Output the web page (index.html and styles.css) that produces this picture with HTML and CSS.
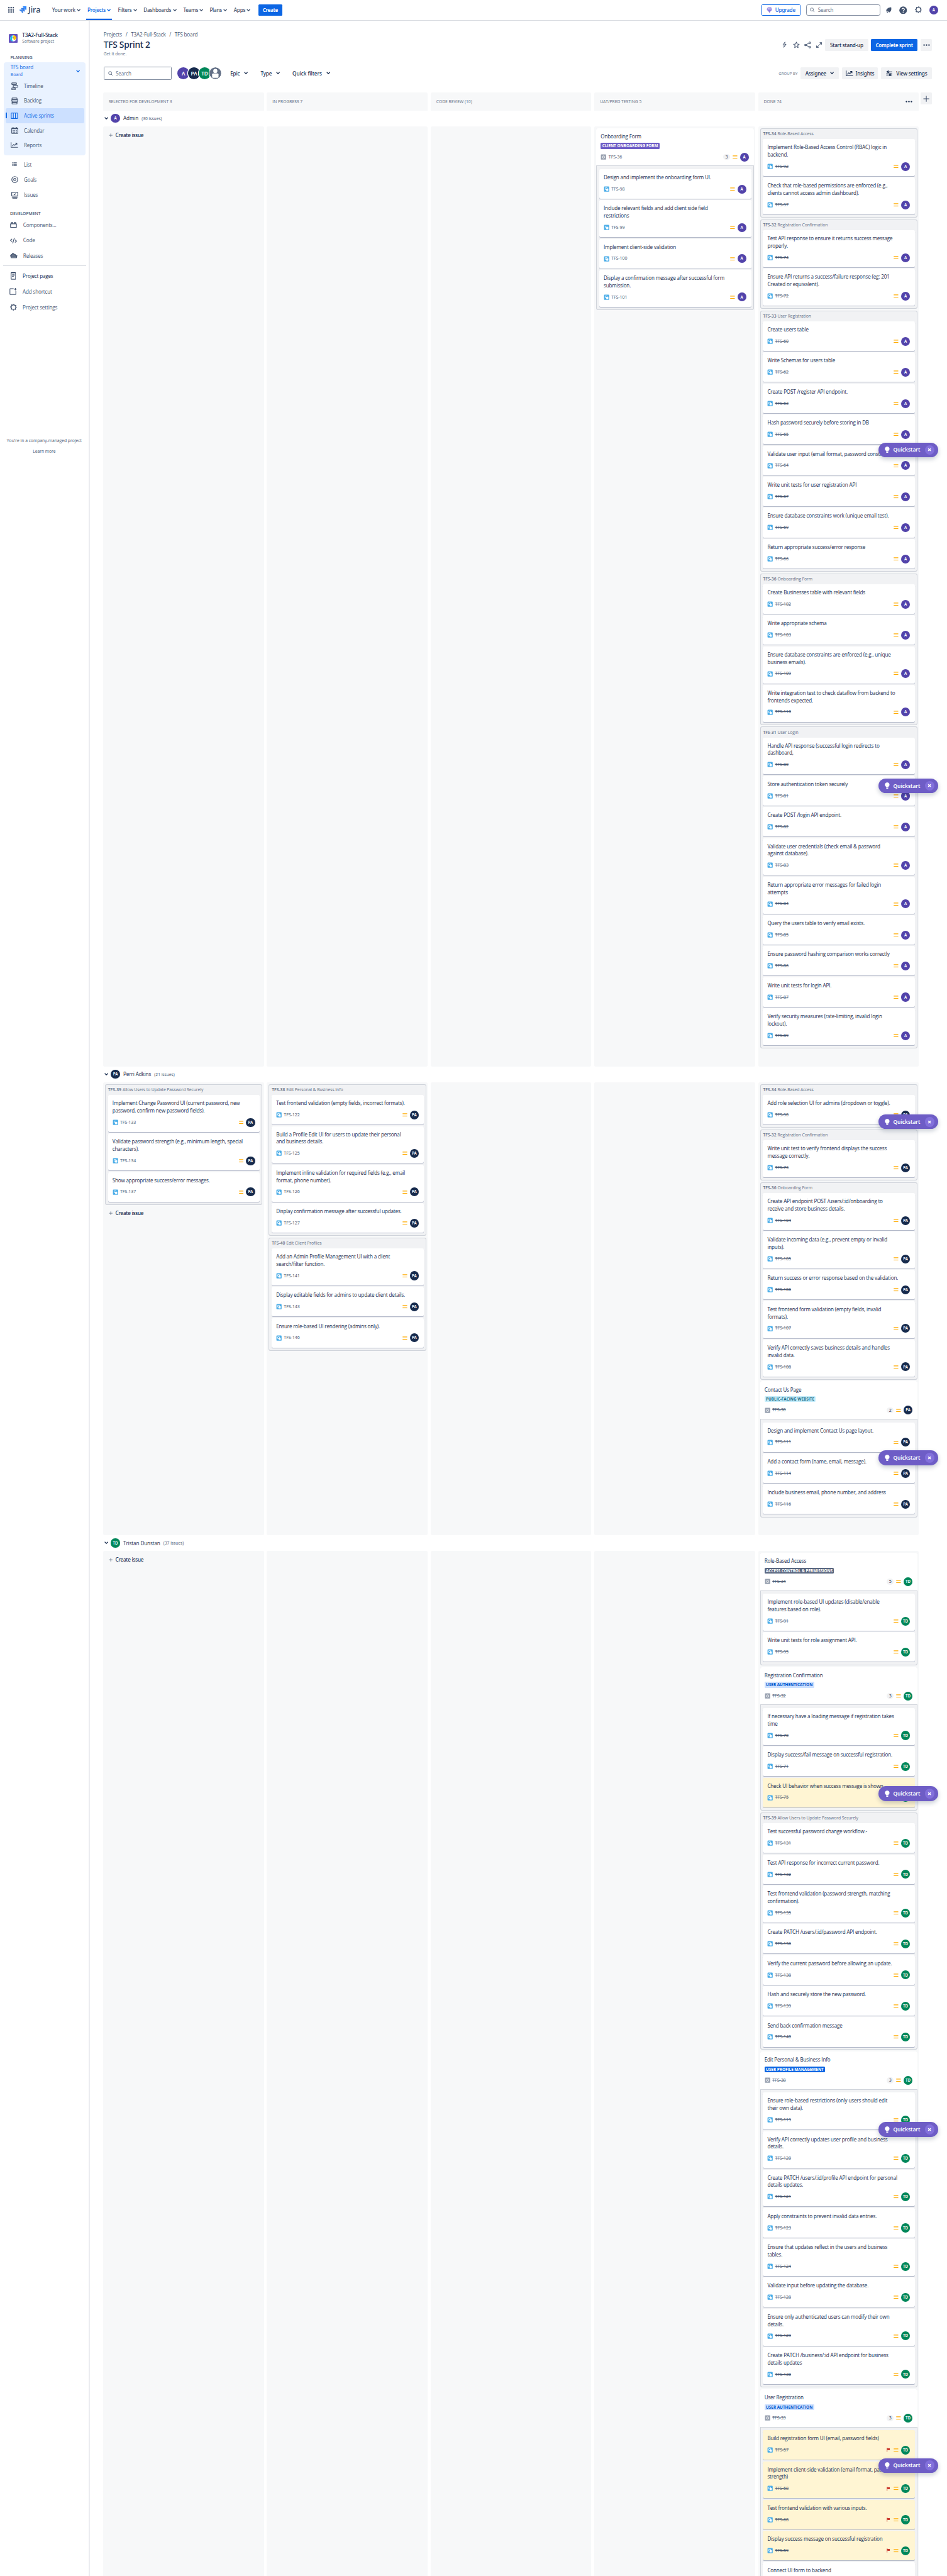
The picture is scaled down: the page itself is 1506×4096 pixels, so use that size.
FILE: index.html
```html
<!DOCTYPE html>
<html lang="en">
<head>
<meta charset="utf-8">
<title>TFS board - Jira</title>
<link rel="stylesheet" href="styles.css">
</head>
<body>
<svg class="sprite" aria-hidden="true">
  <symbol id="i-chev" viewBox="0 0 8 8"><path d="M1.200 2.600 4 5.400 6.800 2.600" fill="none" stroke="currentColor" stroke-width="1.500" stroke-linecap="round" stroke-linejoin="round"/></symbol>
  <symbol id="i-apps" viewBox="0 0 12 12"><g fill="currentColor"><rect width="3" height="3" rx=".8"/><rect x="4.500" width="3" height="3" rx=".8"/><rect x="9" width="3" height="3" rx=".8"/><rect y="4.500" width="3" height="3" rx=".8"/><rect x="4.500" y="4.500" width="3" height="3" rx=".8"/><rect x="9" y="4.500" width="3" height="3" rx=".8"/><rect y="9" width="3" height="3" rx=".8"/><rect x="4.500" y="9" width="3" height="3" rx=".8"/><rect x="9" y="9" width="3" height="3" rx=".8"/></g></symbol>
  <symbol id="i-jira" viewBox="0 0 14 14"><path d="M6.800 0H14v7.300a3.200 3.200 0 0 1-3.200-3.200V3.300H10A3.200 3.200 0 0 1 6.800 0z" fill="#2684ff"/><path d="M3.400 3.400h7.200v7.300a3.200 3.200 0 0 1-3.200-3.200v-.8h-.8a3.200 3.200 0 0 1-3.200-3.300z" fill="#2f7bea"/><path d="M0 6.800h7.200V14A3.200 3.200 0 0 1 4 10.900V10h-.8A3.200 3.200 0 0 1 0 6.800z" fill="#3b83e8"/></symbol>
  <symbol id="i-search" viewBox="0 0 10 10"><circle cx="4.200" cy="4.200" r="3.300" fill="none" stroke="currentColor" stroke-width="1.200"/><path d="M6.700 6.700 9.300 9.300" stroke="currentColor" stroke-width="1.300" stroke-linecap="round"/></symbol>
  <symbol id="i-gem" viewBox="0 0 12 12"><path d="M3 1.300h6L11.200 4.500 6 11 .8 4.500zM.8 4.500h10.400M4.200 1.300 3.800 4.500 6 11l2.200-6.500-.4-3.200M6 1.300v9.700M2 7h8" fill="#dfd8fd" stroke="#8270db" stroke-width="1"/></symbol>
  <symbol id="i-bell" viewBox="0 0 14 14"><path d="M12.600.6c.5 2.100.7 5.200-.4 7.700-.8 1.700-2 2.500-2.600 3.700L1 7.100C2.300 6.600 3 4.900 4.700 3.300 6.900 1.500 10 .7 12.600.6z" fill="currentColor"/><path d="M2.700 9.300l3.800 2.200a2.200 2.200 0 0 1-3.800-2.200z" fill="currentColor"/></symbol>
  <symbol id="i-help" viewBox="0 0 16 16"><circle cx="8" cy="8" r="7.700" fill="currentColor"/><path d="M5.500 6.300a2.500 2.300 0 1 1 3.700 2c-.8.4-1.200.8-1.200 1.600" fill="none" stroke="#fff" stroke-width="1.600"/><circle cx="8" cy="12" r="1.050" fill="#fff"/></symbol>
  <symbol id="i-gear" viewBox="0 0 14 14"><circle cx="7" cy="7" r="4.500" fill="none" stroke="currentColor" stroke-width="1.500"/><circle cx="7" cy="7" r="5.800" fill="none" stroke="currentColor" stroke-width="1.700" stroke-dasharray="2.280 2.280" stroke-dashoffset="1.140"/></symbol>
  <symbol id="i-bolt" viewBox="0 0 9 13"><path d="M5.600.9 1.200 7h2.900l-.8 5 4.500-6.300H4.900z" fill="none" stroke="currentColor" stroke-width="1.200" stroke-linejoin="round"/></symbol>
  <symbol id="i-star" viewBox="0 0 14 14"><path d="M7 1.200l1.700 3.800 4 .5-3 2.800.8 4.100L7 10.400 3.500 12.400l.8-4.100-3-2.800 4-.5z" fill="none" stroke="currentColor" stroke-width="1.300" stroke-linejoin="round"/></symbol>
  <symbol id="i-share" viewBox="0 0 14 14"><g fill="none" stroke="currentColor" stroke-width="1.300"><circle cx="2.500" cy="7" r="1.700"/><circle cx="11.200" cy="2.700" r="1.700"/><circle cx="11.200" cy="11.300" r="1.700"/><path d="M4 6.200 9.700 3.400M4 7.800l5.700 2.800"/></g></symbol>
  <symbol id="i-expand" viewBox="0 0 12 12"><path d="M7.500.9h3.600v3.600M10.800 1.200 7.300 4.700M4.500 11.100H.9V7.500M1.200 10.800l3.500-3.500" fill="none" stroke="currentColor" stroke-width="1.400" stroke-linecap="round"/></symbol>
  <symbol id="i-more" viewBox="0 0 14 4"><g fill="currentColor"><circle cx="2" cy="2" r="1.500"/><circle cx="7" cy="2" r="1.500"/><circle cx="12" cy="2" r="1.500"/></g></symbol>
  <symbol id="i-chart" viewBox="0 0 15 12"><path d="M.8.8v9.700h13.600M3.600 7.400l2.700-2.700 2 1.900 4-4.100M9.600 2h3v3" fill="none" stroke="currentColor" stroke-width="1.400" stroke-linejoin="round" stroke-linecap="round"/></symbol>
  <symbol id="i-sliders" viewBox="0 0 13 12"><g fill="none" stroke="currentColor" stroke-width="1.400"><path d="M.5 2.800h2.800M7 2.800h5.500M.5 9.200h5.700M10.500 9.200h2"/><path d="M.5 6h12" stroke-width=".9"/><circle cx="4.700" cy="2.800" r="1.700" fill="#f1f2f4"/><circle cx="8.500" cy="9.200" r="1.700" fill="#f1f2f4"/></g></symbol>
  <symbol id="i-plus" viewBox="0 0 14 14"><path d="M7 .7v12.600M.7 7h12.600" stroke="currentColor" stroke-width="1.500"/></symbol>
  <symbol id="i-timeline" viewBox="0 0 14 16"><g fill="none" stroke="currentColor" stroke-width="1.500"><rect x="1" y="1" width="9.500" height="3.600" rx="1"/><rect x="4" y="6.200" width="9.200" height="3.600" rx="1"/><rect x="1" y="11.400" width="7" height="3.600" rx="1"/></g></symbol>
  <symbol id="i-backlog" viewBox="0 0 14 14"><g fill="none" stroke="currentColor" stroke-width="1.500"><rect x="1.500" y="1" width="10" height="2.800" rx=".8"/><rect x="1" y="3.900" width="12" height="3.200" rx=".8"/><rect x="1.500" y="7.100" width="10.500" height="3" rx=".8"/><rect x="1.500" y="10.100" width="10" height="3" rx=".8"/></g></symbol>
  <symbol id="i-board" viewBox="0 0 15 13"><path d="M1 1.800a.8.8 0 0 1 .8-.8h11.400a.8.8 0 0 1 .8.800v9.400a.8.8 0 0 1-.8.800H1.800a.8.8 0 0 1-.8-.8zM5.300 1v11M9.700 1v11" fill="none" stroke="currentColor" stroke-width="1.500"/></symbol>
  <symbol id="i-calendar" viewBox="0 0 14 14"><rect x=".8" y="2" width="12.400" height="11.200" rx="1" fill="none" stroke="currentColor" stroke-width="1.300"/><path d="M.8 3.300h12.400M3.500.3v3M10.500.3v3" stroke="currentColor" stroke-width="2"/><path d="M3 7h8M3 9h8M3 11h8" stroke="currentColor" stroke-width="1.300" stroke-dasharray="1.600 1.600"/></symbol>
  <symbol id="i-list" viewBox="0 0 10 8"><path d="M0 1h1.600M3 1h7M0 4h1.600M3 4h7M0 7h1.600M3 7h7" stroke="currentColor" stroke-width="1.500"/></symbol>
  <symbol id="i-goal" viewBox="0 0 14 14"><g fill="none" stroke="currentColor" stroke-width="1.500"><circle cx="7" cy="7" r="6"/><circle cx="7" cy="7" r="2.300"/></g></symbol>
  <symbol id="i-issues" viewBox="0 0 14 14"><rect x=".8" y=".8" width="12.400" height="7.800" rx=".8" fill="none" stroke="currentColor" stroke-width="1.500"/><path d="M5 4.600l1.500 1.400 2.600-2.700" fill="none" stroke="currentColor" stroke-width="1.300"/><path d="M1 10.700h12M2.200 13h9.600" stroke="currentColor" stroke-width="1.500"/></symbol>
  <symbol id="i-component" viewBox="0 0 14 12"><path d="M1.500 3.600h11a.5.5 0 0 1 .5.500v6.400a.5.5 0 0 1-.5.500h-11a.5.5 0 0 1-.5-.5V4.100a.5.5 0 0 1 .5-.5zM2.600 3.300V1.100h3v2.200M8.400 3.300V1.100h3v2.200" fill="none" stroke="currentColor" stroke-width="1.500"/></symbol>
  <symbol id="i-code" viewBox="0 0 14 12"><path d="M3.600 2.800.9 5.200l2.700 2.300M10.400 4.500l2.700 2.400-2.700 2.300M8.600 1 5.400 11.200" fill="none" stroke="currentColor" stroke-width="1.500" stroke-linecap="round"/></symbol>
  <symbol id="i-ship" viewBox="0 0 15 11"><path d="M1 5.800h13l-1 4.200H2.400zM2.500 5.500V3.200h8v2.300M4.500 3V1h3v2M1 7.600h12" fill="none" stroke="currentColor" stroke-width="1.500"/></symbol>
  <symbol id="i-page" viewBox="0 0 11 15"><rect x=".8" y=".8" width="9.400" height="13.400" rx="1" fill="none" stroke="currentColor" stroke-width="1.500"/><path d="M3 4h5M3 6.200h5M3 8.400h3" stroke="currentColor" stroke-width="1.200"/></symbol>
  <symbol id="i-shortcut" viewBox="0 0 15 14"><path d="M8.500 1.400H1.800a.8.8 0 0 0-.8.800v10a.8.8 0 0 0 .8.800h10.400a.8.8 0 0 0 .8-.8V6.500M12 0v4.800M9.600 2.400h4.800" fill="none" stroke="currentColor" stroke-width="1.400"/></symbol>
  <symbol id="i-subtask" viewBox="0 0 16 16"><rect x="1" y="1" width="14" height="14" rx="2" fill="#4bade8"/><rect x="4.200" y="4.200" width="5.200" height="5.200" rx=".8" fill="none" stroke="#fff" stroke-width="1.300"/><rect x="7" y="7" width="5.600" height="5.600" rx=".8" fill="#fff"/></symbol>
  <symbol id="i-story" viewBox="0 0 16 16"><rect x="1" y="1" width="14" height="14" rx="1.500" fill="#97a0af"/><circle cx="8" cy="8" r="3" fill="none" stroke="#fff" stroke-width="1.700"/></symbol>
  <symbol id="i-medium" viewBox="0 0 10 7"><path d="M.3 1.200h9.400M.3 5.800h9.400" stroke="#ffab00" stroke-width="1.600"/></symbol>
  <symbol id="i-flag" viewBox="0 0 8 9"><path d="M1 0v9" stroke="#c9372c" stroke-width="1.200"/><path d="M1 .6c2-.9 3.500.9 6.500 0v4.400c-3 .9-4.500-.9-6.500 0z" fill="#c9372c"/></symbol>
  <symbol id="i-bulb" viewBox="0 0 10 13"><path d="M5 0a4.700 4.700 0 0 1 2.600 8.600L7.200 10H2.800l-.4-1.400A4.700 4.700 0 0 1 5 0zM3 10.800h4V12a1 1 0 0 1-1 1H4a1 1 0 0 1-1-1z" fill="#fff"/></symbol>
  <symbol id="i-cross" viewBox="0 0 8 8"><path d="M1.500 1.500l5 5M6.500 1.500l-5 5" stroke="#fff" stroke-width="1.900"/></symbol>
  <symbol id="i-parrot" viewBox="0 0 18 18"><rect width="18" height="18" rx="2" fill="#6554c0"/><circle cx="9" cy="9" r="6" fill="#fff"/><path d="M9 3a6 6 0 0 0 0 12 6.500 6.500 0 0 1-2.600-6A6.500 6.500 0 0 1 9 3z" fill="#00c7e5"/><path d="M9 3a6 6 0 0 1 6.600 6.300c-1.600-.2-2.400.8-2.400 2.600C12 12.600 9.500 12.500 9.500 9.500z" fill="#ffc400"/><circle cx="8.600" cy="8" r="1.200" fill="#253858"/></symbol>
  <symbol id="i-person" viewBox="0 0 24 24"><circle cx="12" cy="12" r="12" fill="#626f86"/><circle cx="12" cy="7.500" r="4.200" fill="#fff"/><path d="M5.500 14.500a2 2 0 0 1 2-2h9a2 2 0 0 1 2 2v5a2 2 0 0 1-2 2h-9a2 2 0 0 1-2-2z" fill="#fff"/></symbol>
</svg>
<div class="page">
  <header class="topbar">
    <svg class="grid-icon"><use href="#i-apps"/></svg>
    <div class="logo"><svg><use href="#i-jira"/></svg><span>Jira</span></div>
    <nav class="menu">
      <a>Your work<svg class="chev"><use href="#i-chev"/></svg></a>
      <a class="on">Projects<svg class="chev"><use href="#i-chev"/></svg></a>
      <a>Filters<svg class="chev"><use href="#i-chev"/></svg></a>
      <a>Dashboards<svg class="chev"><use href="#i-chev"/></svg></a>
      <a>Teams<svg class="chev"><use href="#i-chev"/></svg></a>
      <a>Plans<svg class="chev"><use href="#i-chev"/></svg></a>
      <a>Apps<svg class="chev"><use href="#i-chev"/></svg></a>
    </nav>
    <button class="btn primary create">Create</button>
    <div class="tools">
      <button class="upgrade"><svg><use href="#i-gem"/></svg>Upgrade</button>
      <div class="find"><svg><use href="#i-search"/></svg>Search</div>
      <svg class="t-bell"><use href="#i-bell"/></svg>
      <svg class="t-help"><use href="#i-help"/></svg>
      <svg class="t-gear"><use href="#i-gear"/></svg>
      <span class="av admin">A</span>
    </div>
  </header>
  <div class="body">
    <aside class="side">
      <div class="project">
        <svg><use href="#i-parrot"/></svg>
        <div><b>T3A2-Full-Stack</b><small>Software project</small></div>
      </div>
      <h3>PLANNING</h3>
      <div class="planning">
        <div class="plan-head"><div><span>TFS board</span><small>Board</small></div><svg class="chev"><use href="#i-chev"/></svg></div>
        <a><i><svg class="w14 h16"><use href="#i-timeline"/></svg></i>Timeline</a>
        <a><i><svg class="w14 h14"><use href="#i-backlog"/></svg></i>Backlog</a>
        <a class="on"><i><svg class="w15 h13"><use href="#i-board"/></svg></i>Active sprints</a>
        <a><i><svg class="w14 h14"><use href="#i-calendar"/></svg></i>Calendar</a>
        <a><i><svg class="w15 h12"><use href="#i-chart"/></svg></i>Reports</a>
      </div>
      <div class="links">
        <a><i><svg class="w10 h8"><use href="#i-list"/></svg></i>List</a>
        <a><i><svg class="w14 h14"><use href="#i-goal"/></svg></i>Goals</a>
        <a><i><svg class="w14 h14"><use href="#i-issues"/></svg></i>Issues</a>
      </div>
      <h3 class="dev">DEVELOPMENT</h3>
      <div class="links shift">
        <a><i><svg class="w14 h12"><use href="#i-component"/></svg></i>Components...</a>
        <a><i><svg class="w14 h12"><use href="#i-code"/></svg></i>Code</a>
        <a><i><svg class="w15 h11"><use href="#i-ship"/></svg></i>Releases</a>
      </div>
      <div class="links shift last">
        <a class="dark"><i><svg class="w11 h15"><use href="#i-page"/></svg></i>Project pages</a>
        <a><i><svg class="w15 h14"><use href="#i-shortcut"/></svg></i>Add shortcut</a>
        <a><i><svg class="w14 h14"><use href="#i-gear"/></svg></i>Project settings</a>
      </div>
      <div class="note"><p>You're in a company-managed project</p><p>Learn more</p></div>
    </aside>
    <main class="main">
      <div class="crumbs"><span>Projects</span><span>/</span><span>T3A2-Full-Stack</span><span>/</span><span>TFS board</span></div>
      <div class="title-row">
        <h1>TFS Sprint 2</h1>
        <div class="actions">
          <svg class="a-bolt"><use href="#i-bolt"/></svg>
          <svg class="a-star"><use href="#i-star"/></svg>
          <svg class="a-share"><use href="#i-share"/></svg>
          <svg class="a-expand"><use href="#i-expand"/></svg>
          <button class="btn w87">Start stand-up</button>
          <button class="btn primary w94">Complete sprint</button>
          <button class="btn w24"><svg class="dots"><use href="#i-more"/></svg></button>
        </div>
      </div>
      <p class="goal">Get it done.</p>
      <div class="filters">
        <div class="box"><svg><use href="#i-search"/></svg>Search</div>
        <div class="people"><span class="av big admin">A</span><span class="av big perri">PA</span><span class="av big tristan">TD</span><svg class="av big"><use href="#i-person"/></svg></div>
        <span class="drop epic">Epic<svg class="chev"><use href="#i-chev"/></svg></span>
        <span class="drop type">Type<svg class="chev"><use href="#i-chev"/></svg></span>
        <span class="drop quick">Quick filters<svg class="chev"><use href="#i-chev"/></svg></span>
        <div class="view">
          <small>GROUP BY</small>
          <button class="btn w78">Assignee<svg class="chev"><use href="#i-chev"/></svg></button>
          <button class="btn w73"><svg class="w15 h12"><use href="#i-chart"/></svg>Insights</button>
          <button class="btn w104"><svg class="w13 h12"><use href="#i-sliders"/></svg>View settings</button>
        </div>
      </div>
      <div class="heads">
        <div>SELECTED FOR DEVELOPMENT 3</div><div>IN PROGRESS 7</div><div>CODE REVIEW (10)</div><div>UAT/PRED TESTING 5</div><div>DONE 74<svg class="dots"><use href="#i-more"/></svg></div>
        <button class="btn w24"><svg class="w13 h13"><use href="#i-plus"/></svg></button>
      </div>
      <div id="lanes"></div>
    </main>
  </div>
  <div id="nudges"></div>
</div>
<script src="app.js"></script>
</body>
</html>
```
FILE: styles.css
```css
/* 1rem = 10 design pixels on the 1920-wide layout */
html { font-size: 7.84375px; overflow: hidden; }
* { box-sizing: border-box; }
body { margin: 0; background: #fff; color: #172b4d; font: 400 1.03rem/1.5rem "Open Sans", "Noto Sans", sans-serif; letter-spacing: -.0205rem; }
p, h1, h3 { margin: 0; }
svg { display: block; flex: none; }
small { font-size: .855rem; letter-spacing: 0; }
button { border: 0; margin: 0; padding: 0; }
.sprite { position: absolute; width: 0; height: 0; }
.page { position: relative; width: 192rem; height: 522.2rem; overflow: hidden; }
.chev { width: .8rem; height: .8rem; }
.w10 { width: 1rem; } .w11 { width: 1.1rem; } .w13 { width: 1.3rem; } .w14 { width: 1.4rem; } .w15 { width: 1.5rem; }
.h8 { height: .8rem; } .h11 { height: 1.1rem; } .h12 { height: 1.2rem; } .h13 { height: 1.3rem; } .h14 { height: 1.4rem; } .h15 { height: 1.5rem; } .h16 { height: 1.6rem; }
.dots { width: 1.4rem; height: .4rem; }
.menu, .btn, .upgrade, .drop, .add, .logo, h1, .nudge, .av, .side h3, .project b { font-family: "Noto Sans", "Open Sans", sans-serif; }

.av { display: flex; align-items: center; justify-content: center; flex: none; width: 1.8rem; height: 1.8rem; border-radius: 50%; color: #fff; font-size: .8rem; font-weight: 600; letter-spacing: 0; }
.admin { background: #5243aa; }
.perri { background: #172b4d; }
.tristan { background: #00875a; }

.topbar { display: flex; align-items: center; height: 4.2rem; padding-left: 1.7rem; padding-right: 1.8rem; border-bottom: 1px solid #d9dce1; color: #44546f; }
.grid-icon { width: 1.2rem; height: 1.2rem; }
.logo { display: flex; align-items: center; gap: .4rem; width: 6.4rem; margin-left: 1.05rem; font-size: 1.6rem; font-weight: 500; color: #344563; letter-spacing: 0; }
.logo svg { width: 1.4rem; height: 1.4rem; }
.menu { display: grid; grid-template-columns: 7.18rem 6.18rem 5.2rem 8.05rem 5.35rem 4.9rem 5rem; align-self: stretch; margin-left: .2rem; font-weight: 500; font-size: 1.04rem; letter-spacing: -.034rem; }
.menu a { display: flex; align-items: center; gap: .3rem; justify-self: start; padding-right: .1rem; white-space: nowrap; }
.menu .on { color: #0c66e4; box-shadow: inset 0 -.3rem #0c66e4; padding: 0 .2rem; margin-left: -.2rem; }
.btn { display: inline-flex; align-items: center; justify-content: center; height: 2.4rem; border-radius: .2rem; background: #f1f2f4; color: #172b4d; font-weight: 500; font-size: 1.04rem; letter-spacing: -.024rem; white-space: nowrap; flex: none; }
.btn.primary { background: #0c66e4; color: #fff; font-weight: 600; font-size: 1.03rem; letter-spacing: -.034rem; }
.create { width: 4.8rem; }
.w24 { width: 2.4rem; } .w73 { width: 7.3rem; gap: .5rem; } .w78 { width: 7.8rem; gap: .8rem; } .w87 { width: 8.7rem; } .w94 { width: 9.4rem; } .w104 { width: 10.4rem; gap: .8rem; }
.tools { display: flex; align-items: center; margin-left: auto; }
.upgrade { display: flex; align-items: center; justify-content: center; gap: .6rem; width: 7.9rem; height: 2.4rem; border: 1px solid #0c66e4; border-radius: .2rem; background: #fff; color: #0c66e4; font-weight: 500; font-size: 1.04rem; letter-spacing: -.028rem; }
.upgrade svg { width: 1.2rem; height: 1.2rem; }
.find { display: flex; align-items: center; gap: .65rem; width: 15rem; height: 2.4rem; margin: 0 1.1rem 0 1.2rem; padding-left: .65rem; border: 1px solid #8590a2; border-radius: .4rem; color: #626f86; }
.find svg, .box svg { width: .95rem; height: .95rem; }
.t-bell { width: 1.3rem; height: 1.3rem; }
.t-help { width: 1.6rem; height: 1.6rem; margin: 0 1.5rem; }
.t-gear { width: 1.4rem; height: 1.4rem; margin-right: 1.55rem; }

.body { display: flex; height: 518rem; }
.side { width: 18.2rem; flex: none; border-right: .3rem solid #ebecf0; padding-top: 2.7rem; color: #44546f; }
.project { display: flex; gap: .9rem; padding-left: 1.8rem; height: 1.8rem; align-items: center; }
.project svg { width: 1.8rem; height: 1.8rem; }
.project b { display: block; color: #172b4d; font-weight: 500; font-size: 1.04rem; letter-spacing: -.02rem; line-height: 1.3rem; }
.project small { display: block; color: #626f86; font-size: .847rem; line-height: 1.3rem; }
.side h3 { font-size: .86rem; font-weight: 500; letter-spacing: 0; line-height: 1.7rem; margin: 2.15rem 0 0 2.1rem; height: 1.75rem; color: #44546f; }
.side h3.dev { margin: 1.3rem 0 0 2.05rem; height: 1.7rem; }
.planning { margin: 0 .6rem 0 .8rem; padding-bottom: .6rem; border-radius: .5rem; background: #e9f2ff; }
.plan-head { display: flex; justify-content: space-between; align-items: center; height: 3.35rem; padding: .3rem 1.1rem 0 1.35rem; color: #0c66e4; }
.plan-head span, .plan-head small { display: block; }
.planning a { display: flex; align-items: center; height: 3rem; margin: 0 .3rem; padding-left: .85rem; }
.planning i, .links i { display: flex; justify-content: center; width: 2rem; margin-right: .9rem; }
.planning .on { background: #cce0ff linear-gradient(#0c66e4, #0c66e4) 0 50% / .25rem 1.2rem no-repeat; color: #0c66e4; border-radius: .3rem; }
.links { padding: .25rem 0 0 1.95rem; }
.links.shift { padding: 0 0 0 1.8rem; }
.links a { display: flex; align-items: center; height: 3.1rem; }
.links.last { margin: .4rem .5rem 0 .6rem; padding: .5rem 0 0 1.1rem; border-top: 1px solid #d5d9e0; }
.links.last a { height: 3.15rem; }
.dark { color: #172b4d; }
.note { margin-top: 24.8rem; text-align: center; font-size: .86rem; letter-spacing: 0; }
.note p { height: 2.08rem; }

.main { flex: 1; padding: 2rem 0 0 2.7rem; }
.crumbs { display: flex; gap: .72rem; height: 1.5rem; color: #44546f; padding-left: .1rem; font-size: 1.04rem; letter-spacing: -.018rem; }
.title-row { display: flex; justify-content: space-between; align-items: center; height: 2.4rem; margin: .2rem 3rem 0 .1rem; }
h1 { font-size: 1.76rem; font-weight: 500; letter-spacing: -.035rem; }
.actions { display: flex; align-items: center; color: #44546f; }
.a-bolt { width: .9rem; height: 1.3rem; margin-right: 1.2rem; }
.a-star { width: 1.4rem; height: 1.4rem; margin-right: .95rem; }
.a-share { width: 1.4rem; height: 1.4rem; margin-right: 1.05rem; }
.a-expand { width: 1.2rem; height: 1.2rem; margin-right: .6rem; }
.actions .btn + .btn { margin-left: .6rem; }
.goal { margin-left: .1rem; font-size: .857rem; letter-spacing: 0; line-height: 1.2rem; color: #626f86; }
.filters { display: flex; align-items: center; height: 2.7rem; margin: 2rem 3rem 0 .1rem; }
.box { display: flex; align-items: center; gap: .6rem; width: 13.8rem; height: 2.7rem; padding-left: .8rem; border: 1px solid #8590a2; border-radius: .2rem; color: #626f86; flex: none; }
.people { display: flex; width: 11.9rem; padding-left: 1.2rem; flex: none; }
.big { width: 2.4rem; height: 2.4rem; font-size: 1.03rem; box-shadow: 0 0 0 .15rem #fff; }
.big + .big { margin-left: -.25rem; }
.drop { display: flex; align-items: center; gap: .85rem; font-size: 1.04rem; letter-spacing: -.024rem; font-weight: 500; }
.drop.epic { width: 6.15rem; } .drop.type { width: 6.45rem; } .drop.quick { letter-spacing: 0; }
.view { display: flex; align-items: center; gap: .6rem; margin-left: auto; }
.view small { color: #626f86; font-size: .78rem; }
.heads { display: flex; gap: .6rem; margin-top: 2.6rem; align-items: flex-start; }
.heads > div { display: flex; align-items: center; justify-content: space-between; width: 32.6rem; height: 3.6rem; padding: 0 1.3rem 0 1.15rem; border-radius: .3rem .3rem 0 0; background: #f7f8f9; color: #626f86; font-size: .857rem; letter-spacing: 0; }
.heads .dots { color: #172b4d; }
.heads .btn { margin-left: -.3rem; color: #44546f; }

.lane { display: flex; align-items: center; height: 3.2rem; padding-left: .25rem; font-size: 1.04rem; letter-spacing: -.015rem; }
.lane .av { margin: 0 .7rem 0 .55rem; }
.lane small { margin-left: .65rem; color: #44546f; padding-top: .1rem; font-size: .85rem; }
.cols { display: flex; gap: .6rem; }
.col { width: 32.6rem; padding: .4rem .3rem 0 .4rem; border-radius: .3rem; background: #f7f8f9; }
.add { display: flex; align-items: center; gap: .5rem; height: 2.8rem; padding-left: .8rem; font-weight: 500; font-size: 1.04rem; letter-spacing: -.03rem; }
.add svg { width: .8rem; height: .8rem; color: #44546f; }
.group { margin-bottom: .36rem; border-radius: .4rem; background: #f1f2f4; box-shadow: inset 0 0 0 1px #cfd3da; padding: 0 .5rem .63rem .6rem; }
.group h4 { margin: 0; padding-top: .4rem; height: 2.2rem; font-size: .87rem; letter-spacing: -.01rem; line-height: 1.5rem; font-weight: 400; color: #626f86; }
.group h4 b { font-weight: 600; margin-right: .25rem; letter-spacing: 0; }
.group.nest { padding-top: 0; padding-bottom: .72rem; }
.parent { margin: 0 -.5rem .6rem -.6rem; height: 7.7rem; padding: .9rem 1rem 0 .9rem; background: #fff; border-radius: .3rem .3rem 0 0; border-bottom: 1px solid #cfd3da; }
.epic-tag { display: table; height: 1.2rem; margin-top: .6rem; padding: 0 .3rem; border-radius: .2rem; font-size: .81rem; letter-spacing: 0; line-height: 1.2rem; font-weight: 700; }
.parent .meta { margin-top: .75rem; gap: .4rem; }
.onb { background: #6e5dc6; color: #fff; }
.pub { background: #c6edfb; color: #206a83; }
.acc { background: #596780; color: #fff; }
.aut { background: #cce0ff; color: #0055cc; }
.pro { background: #0c66e4; color: #fff; }
.card { min-height: 6rem; padding: .9rem 1rem 1.05rem .9rem; border-radius: .3rem; background: #fff; box-shadow: 0 1px 0 #b3b9c9; white-space: pre; }
.card + .card { margin-top: .3rem; }
.card.hot { background: #fff5d3; }
.meta { display: flex; align-items: center; gap: .35rem; height: 1.8rem; margin-top: .75rem; color: #44546f; font-size: .9rem; letter-spacing: -.008rem; }
.meta > svg { width: 1.2rem; height: 1.2rem; }
.meta .done { text-decoration: line-through; }
.end { display: flex; align-items: center; margin-left: auto; }
.end .prio { width: 1rem; height: .7rem; }
.end .av { margin-left: .5rem; }
.end .flag { width: .7rem; height: .9rem; margin-right: .7rem; }
.count { width: 1.4rem; height: 1.2rem; margin-right: .5rem; border-radius: .6rem; background: #f1f2f4; color: #172b4d; text-align: center; line-height: 1.2rem; }

.nudge { position: absolute; left: 178.1rem; display: flex; align-items: center; width: 12.1rem; height: 3rem; border-radius: 1.5rem; background: #6e5dc6; color: #fff; font-weight: 600; font-size: 1.07rem; letter-spacing: 0; padding-left: 1.3rem; box-shadow: 0 .4rem 1rem rgba(9, 30, 66, .22); }
.nudge > svg { width: 1rem; height: 1.3rem; margin-right: .7rem; }
.nudge i { display: flex; align-items: center; justify-content: center; width: 2rem; height: 2rem; margin: 0 .7rem 0 auto; border-radius: 50%; background: #8270db; }
.nudge i svg { width: .8rem; height: .8rem; }
```
FILE: app.js
```js
// Board data: lanes > columns > groups; a group has a key, a title, cards and optionally an epic (shown as a parent card).
const lanes = [
  { who: 'Admin', initials: 'A', cls: 'admin', issues: 30, height: 190.6, cols: [
    { add: true, groups: [] }, { groups: [] }, { groups: [] },
    { groups: [
      { key: 36, title: 'Onboarding Form', epic: ['onb', 'CLIENT ONBOARDING FORM'], count: 3, cards: [
        [98, 'Design and implement the onboarding form UI.'],
        [99, 'Include relevant fields and add client side field\nrestrictions'],
        [100, 'Implement client-side validation'],
        [101, 'Display a confirmation message after successful form\nsubmission.']] }] },
    { done: true, groups: [
      { key: 34, title: 'Role-Based Access', cards: [
        [92, 'Implement Role-Based Access Control (RBAC) logic in\nbackend.'],
        [97, 'Check that role-based permissions are enforced (e.g.,\nclients cannot access admin dashboard).']] },
      { key: 32, title: 'Registration Confirmation', cards: [
        [74, 'Test API response to ensure it returns success message\nproperly.'],
        [72, 'Ensure API returns a success/failure response (eg: 201\nCreated or equivalent).']] },
      { key: 33, title: 'User Registration', cards: [
        [60, 'Create users table'],
        [62, 'Write Schemas for users table'],
        [63, 'Create POST /register API endpoint.'],
        [65, 'Hash password securely before storing in DB'],
        [64, 'Validate user input (email format, password constraints)'],
        [67, 'Write unit tests for user registration API'],
        [69, 'Ensure database constraints work (unique email test).'],
        [66, 'Return appropriate success/error response']] },
      { key: 36, title: 'Onboarding Form', cards: [
        [102, 'Create Businesses table with relevant fields'],
        [103, 'Write appropriate schema'],
        [109, 'Ensure database constraints are enforced (e.g., unique\nbusiness emails).'],
        [110, 'Write integration test to check dataflow from backend to\nfrontends expected.']] },
      { key: 31, title: 'User Login', cards: [
        [80, 'Handle API response (successful login redirects to\ndashboard,'],
        [81, 'Store authentication token securely'],
        [82, 'Create POST /login API endpoint.'],
        [83, 'Validate user credentials (check email & password\nagainst database).'],
        [84, 'Return appropriate error messages for failed login\nattempts'],
        [85, 'Query the users table to verify email exists.'],
        [86, 'Ensure password hashing comparison works correctly'],
        [87, 'Write unit tests for login API.'],
        [89, 'Verify security measures (rate-limiting, invalid login\nlockout).']] }] }] },
  { who: 'Perri Adkins', initials: 'PA', cls: 'perri', issues: 21, height: 91.8, cols: [
    { add: true, groups: [
      { key: 39, title: 'Allow Users to Update Password Securely', cards: [
        [133, 'Implement Change Password UI (current password, new\npassword, confirm new password fields).'],
        [134, 'Validate password strength (e.g., minimum length, special\ncharacters).'],
        [137, 'Show appropriate success/error messages.']] }] },
    { groups: [
      { key: 38, title: 'Edit Personal & Business Info', cards: [
        [122, 'Test frontend validation (empty fields, incorrect formats).'],
        [125, 'Build a Profile Edit UI for users to update their personal\nand business details.'],
        [126, 'Implement inline validation for required fields (e.g., email\nformat, phone number).'],
        [127, 'Display confirmation message after successful updates.']] },
      { key: 40, title: 'Edit Client Profiles', cards: [
        [141, 'Add an Admin Profile Management UI with a client\nsearch/filter function.'],
        [143, 'Display editable fields for admins to update client details.'],
        [146, 'Ensure role-based UI rendering (admins only).']] }] },
    { groups: [] }, { groups: [] },
    { done: true, groups: [
      { key: 34, title: 'Role-Based Access', cards: [
        [90, 'Add role selection UI for admins (dropdown or toggle).']] },
      { key: 32, title: 'Registration Confirmation', cards: [
        [73, 'Write unit test to verify frontend displays the success\nmessage correctly.']] },
      { key: 36, title: 'Onboarding Form', cards: [
        [104, 'Create API endpoint POST /users/:id/onboarding to\nreceive and store business details.'],
        [105, 'Validate incoming data (e.g., prevent empty or invalid\ninputs).'],
        [106, 'Return success or error response based on the validation.'],
        [107, 'Test frontend form validation (empty fields, invalid\nformats).'],
        [108, 'Verify API correctly saves business details and handles\ninvalid data.']] },
      { key: 30, title: 'Contact Us Page', epic: ['pub', 'PUBLIC-FACING WEBSITE'], count: 2, cards: [
        [111, 'Design and implement Contact Us page layout.'],
        [114, 'Add a contact form (name, email, message).'],
        [116, 'Include business email, phone number, and address']] }] }] },
  { who: 'Tristan Dunstan', initials: 'TD', cls: 'tristan', issues: 37, height: 215, cols: [
    { add: true, groups: [] }, { groups: [] }, { groups: [] }, { groups: [] },
    { done: true, groups: [
      { key: 34, title: 'Role-Based Access', epic: ['acc', 'ACCESS CONTROL & PERMISSIONS'], count: 5, cards: [
        [91, 'Implement role-based UI updates (disable/enable\nfeatures based on role).'],
        [95, 'Write unit tests for role assignment API.']] },
      { key: 32, title: 'Registration Confirmation', epic: ['aut', 'USER AUTHENTICATION'], count: 3, cards: [
        [70, 'If necessary have a loading message if registration takes\ntime'],
        [71, 'Display success/fail message on successful registration.'],
        [75, 'Check UI behavior when success message is shown.', 'hot']] },
      { key: 39, title: 'Allow Users to Update Password Securely', cards: [
        [131, 'Test successful password change workflow.-'],
        [132, 'Test API response for incorrect current password.'],
        [135, 'Test frontend validation (password strength, matching\nconfirmation).'],
        [136, 'Create PATCH /users/:id/password API endpoint.'],
        [138, 'Verify the current password before allowing an update.'],
        [139, 'Hash and securely store the new password.'],
        [140, 'Send back confirmation message']] },
      { key: 38, title: 'Edit Personal & Business Info', epic: ['pro', 'USER PROFILE MANAGEMENT'], count: 3, cards: [
        [119, 'Ensure role-based restrictions (only users should edit\ntheir own data).'],
        [120, 'Verify API correctly updates user profile and business\ndetails.'],
        [121, 'Create PATCH /users/:id/profile API endpoint for personal\ndetails updates.'],
        [123, 'Apply constraints to prevent invalid data entries.'],
        [124, 'Ensure that updates reflect in the users and business\ntables.'],
        [128, 'Validate input before updating the database.'],
        [129, 'Ensure only authenticated users can modify their own\ndetails.'],
        [130, 'Create PATCH /business/:id API endpoint for business\ndetails updates']] },
      { key: 33, title: 'User Registration', epic: ['aut', 'USER AUTHENTICATION'], count: 3, cards: [
        [57, 'Build registration form UI (email, password fields)', 'hot', true],
        [58, 'Implement client-side validation (email format, password\nstrength)', 'hot', true],
        [68, 'Test frontend validation with various inputs.', 'hot', true],
        [59, 'Display success message on successful registration', 'hot', true],
        [null, 'Connect UI form to backend']] }] }] }
];

const esc = s => s.replace(/&/g, '&amp;');
const icon = (id, cls = '') => `<svg class="${cls}"><use href="#i-${id}"/></svg>`;

function meta(lane, done, type, key, extra) {
  return `<div class="meta">${icon(type)}<span class="${done ? 'done' : ''}">TFS-${key}</span>` +
    `<div class="end">${extra}${icon('medium', 'prio')}<span class="av ${lane.cls}">${lane.initials}</span></div></div>`;
}
function card(lane, done, [key, text, tone = '', flagged]) {
  return `<div class="card ${tone}">${esc(text)}${key ? meta(lane, done, 'subtask', key, flagged ? icon('flag', 'flag') : '') : ''}</div>`;
}
function group(lane, done, g) {
  const head = g.epic
    ? `<div class="parent">${esc(g.title)}<span class="epic-tag ${g.epic[0]}">${esc(g.epic[1])}</span>` +
      meta(lane, done, 'story', g.key, `<span class="count">${g.count}</span>`) + '</div>'
    : `<h4><b>TFS-${g.key}</b>${esc(g.title)}</h4>`;
  return `<div class="group ${g.epic ? 'nest' : ''}">${head}${g.cards.map(c => card(lane, done, c)).join('')}</div>`;
}

document.getElementById('lanes').innerHTML = lanes.map(l => `
  <div class="lane">${icon('chev', 'chev')}<span class="av ${l.cls}">${l.initials}</span>${l.who}<small>(${l.issues} issues)</small></div>
  <div class="cols" style="height:${l.height}rem">${l.cols.map(c =>
    `<div class="col">${c.groups.map(g => group(l, c.done, g)).join('')}${c.add ? `<div class="add">${icon('plus')}Create issue</div>` : ''}</div>`).join('')}</div>`).join('');

document.getElementById('nudges').innerHTML = [0, 1, 2, 3, 4, 5, 6].map(n =>
  `<div class="nudge" style="top:${(89.7 + n * 68.1).toFixed(1)}rem">${icon('bulb')}Quickstart<i>${icon('cross')}</i></div>`).join('');
```
